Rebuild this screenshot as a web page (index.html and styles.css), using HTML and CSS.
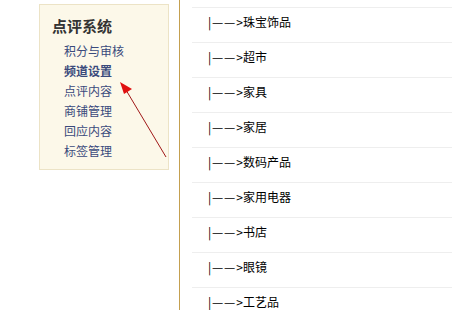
FILE: index.html
```html
<!DOCTYPE html>
<html>
<head>
<meta charset="utf-8">
<link rel="stylesheet" href="styles.css">
</head>
<body>
<div class="page">
  <div class="side">
    <div class="box">
      <div class="title">点评系统</div>
      <ul class="menu">
        <li>积分与审核</li>
        <li class="active">频道设置</li>
        <li>点评内容</li>
        <li>商铺管理</li>
        <li>回应内容</li>
        <li>标签管理</li>
      </ul>
    </div>
  </div>
  <div class="divider"></div>
  <div class="main">
    <div class="row">|<span class="dash">—</span><span class="dash">—</span>&gt;珠宝饰品</div>
    <div class="row">|<span class="dash">—</span><span class="dash">—</span>&gt;超市</div>
    <div class="row">|<span class="dash">—</span><span class="dash">—</span>&gt;家具</div>
    <div class="row">|<span class="dash">—</span><span class="dash">—</span>&gt;家居</div>
    <div class="row">|<span class="dash">—</span><span class="dash">—</span>&gt;数码产品</div>
    <div class="row">|<span class="dash">—</span><span class="dash">—</span>&gt;家用电器</div>
    <div class="row">|<span class="dash">—</span><span class="dash">—</span>&gt;书店</div>
    <div class="row">|<span class="dash">—</span><span class="dash">—</span>&gt;眼镜</div>
    <div class="row">|<span class="dash">—</span><span class="dash">—</span>&gt;工艺品</div>
  </div>
</div>
<svg class="arrow" width="454" height="310" viewBox="0 0 454 310">
  <line x1="166" y1="157" x2="126" y2="90" stroke="#a01818" stroke-width="1"/>
  <polygon points="120,82 132,89 124,94" fill="#e01010"/>
</svg>
</body>
</html>
```
FILE: styles.css
```css
html, body {
  margin: 0;
  padding: 0;
  background: #fff;
  font-family: "Noto Sans CJK SC", "DejaVu Sans", sans-serif;
  font-size: 12px;
}
.page {
  display: flex;
  height: 310px;
  overflow: hidden;
}
.side {
  width: 140px;
  padding: 4px 0 0 39px;
}
.box {
  width: 128px;
  height: 164px;
  background: #fcf8e9;
  border: 1px solid #ece3c6;
}
.title {
  font-size: 15px;
  font-weight: bold;
  color: #333;
  padding: 11px 0 0 12px;
  line-height: 20px;
}
.menu {
  list-style: none;
  margin: 5px 0 0 0;
  padding: 0 0 0 24px;
}
.menu li {
  height: 20px;
  line-height: 20px;
  color: #3a4a7c;
  font-size: 12px;
}
.menu li.active {
  font-weight: bold;
}
.divider {
  width: 1px;
  background: #c4a050;
}
.main {
  flex: 1;
  padding: 7px 2px 0 12px;
}
.row {
  height: 34px;
  border-top: 1px solid #eeeeee;
  padding-left: 16px;
  line-height: 28px;
  color: #000;
}
.dash {
  display: inline-block;
  width: 12px;
  overflow: hidden;
  text-align: left;
  transform: scaleX(1.05);
  transform-origin: left center;
  vertical-align: top;
}
.dash:first-child {
  margin-left: 1px;
}
.arrow {
  position: absolute;
  left: 0;
  top: 0;
  pointer-events: none;
}
```
